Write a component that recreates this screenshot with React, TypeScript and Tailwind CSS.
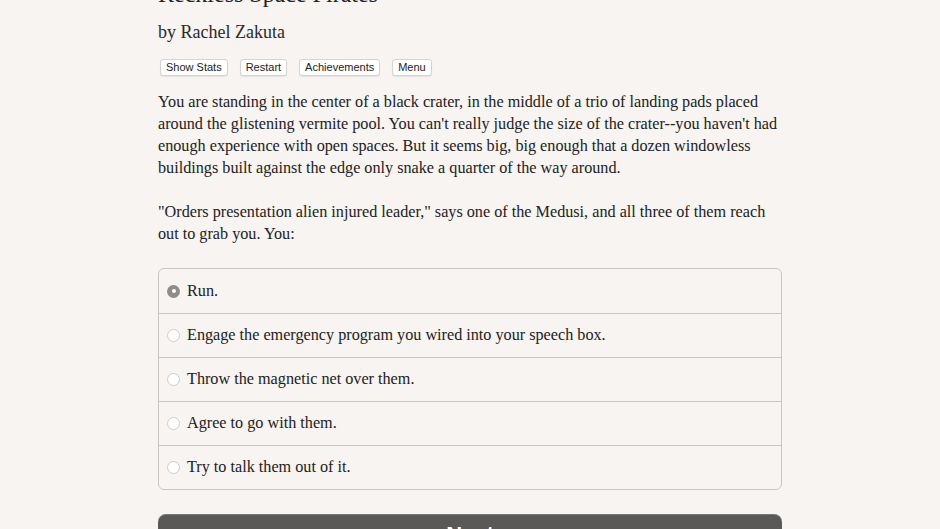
import React from "react";

const choices = [
  "Run.",
  "Engage the emergency program you wired into your speech box.",
  "Throw the magnetic net over them.",
  "Agree to go with them.",
  "Try to talk them out of it.",
];

const serif = { fontFamily: '"Liberation Serif", "DejaVu Serif", serif' };

export default function App() {
  const [selected, setSelected] = React.useState(0);

  return (
    <div className="min-h-screen w-full overflow-hidden bg-[#f7f4f1] text-[#1f1f1f]">
      <div className="mx-auto w-[624px] -mt-[24px]" style={serif}>
        <h1 className="text-[24px] leading-[36px] text-[#222]">Reckless Space Pirates</h1>
        <p className="mt-[8px] text-[18px] leading-[24px] text-[#2a2a2a]">by Rachel Zakuta</p>

        <div
          className="mt-[15px] flex gap-[12px] pl-[2px]"
          style={{ fontFamily: '"Liberation Sans", Arial, sans-serif' }}
        >
          {["Show Stats", "Restart", "Achievements", "Menu"].map((label) => (
            <button
              key={label}
              className="h-[17px] rounded-[3px] border border-[#d6d4d2] bg-white px-[5px] text-[11px] leading-[15px] text-[#222] shadow-[0_1px_1px_rgba(0,0,0,0.08)]"
            >
              {label}
            </button>
          ))}
        </div>

        <div className="mt-[15px] text-[16.2px] leading-[22px] text-[#222]">
          <p>
            You are standing in the center of a black crater, in the middle of a trio of landing pads placed
            around the glistening vermite pool. You can't really judge the size of the crater--you haven't had
            enough experience with open spaces. But it seems big, big enough that a dozen windowless
            buildings built against the edge only snake a quarter of the way around.
          </p>
          <p className="mt-[22px]">
            "Orders presentation alien injured leader," says one of the Medusi, and all three of them reach
            out to grab you. You:
          </p>
        </div>

        <div className="mt-[23px] overflow-hidden rounded-[6px] border border-[#c9c7c5]">
          {choices.map((c, i) => (
            <label
              key={c}
              onClick={() => setSelected(i)}
              className={`flex h-[44px] cursor-pointer items-center gap-[7px] pl-[8px] text-[16.2px] text-[#222] ${
                i > 0 ? "border-t border-[#c9c7c5]" : ""
              }`}
            >
              <span
                className={`flex h-[13px] w-[13px] items-center justify-center rounded-full ${
                  selected === i
                    ? "bg-[#8e8d8c]"
                    : "border border-[#cfcdcb] bg-white"
                }`}
              >
                {selected === i && <span className="h-[4px] w-[4px] rounded-full bg-white" />}
              </span>
              {c}
            </label>
          ))}
        </div>

        <button
          className="mt-[24px] h-[40px] w-full rounded-[8px] border-t border-[#777] bg-[#5a5958] text-[22px] font-bold text-white"
          style={{ fontFamily: '"Liberation Sans", Arial, sans-serif' }}
        >
          Next
        </button>
      </div>
    </div>
  );
}
